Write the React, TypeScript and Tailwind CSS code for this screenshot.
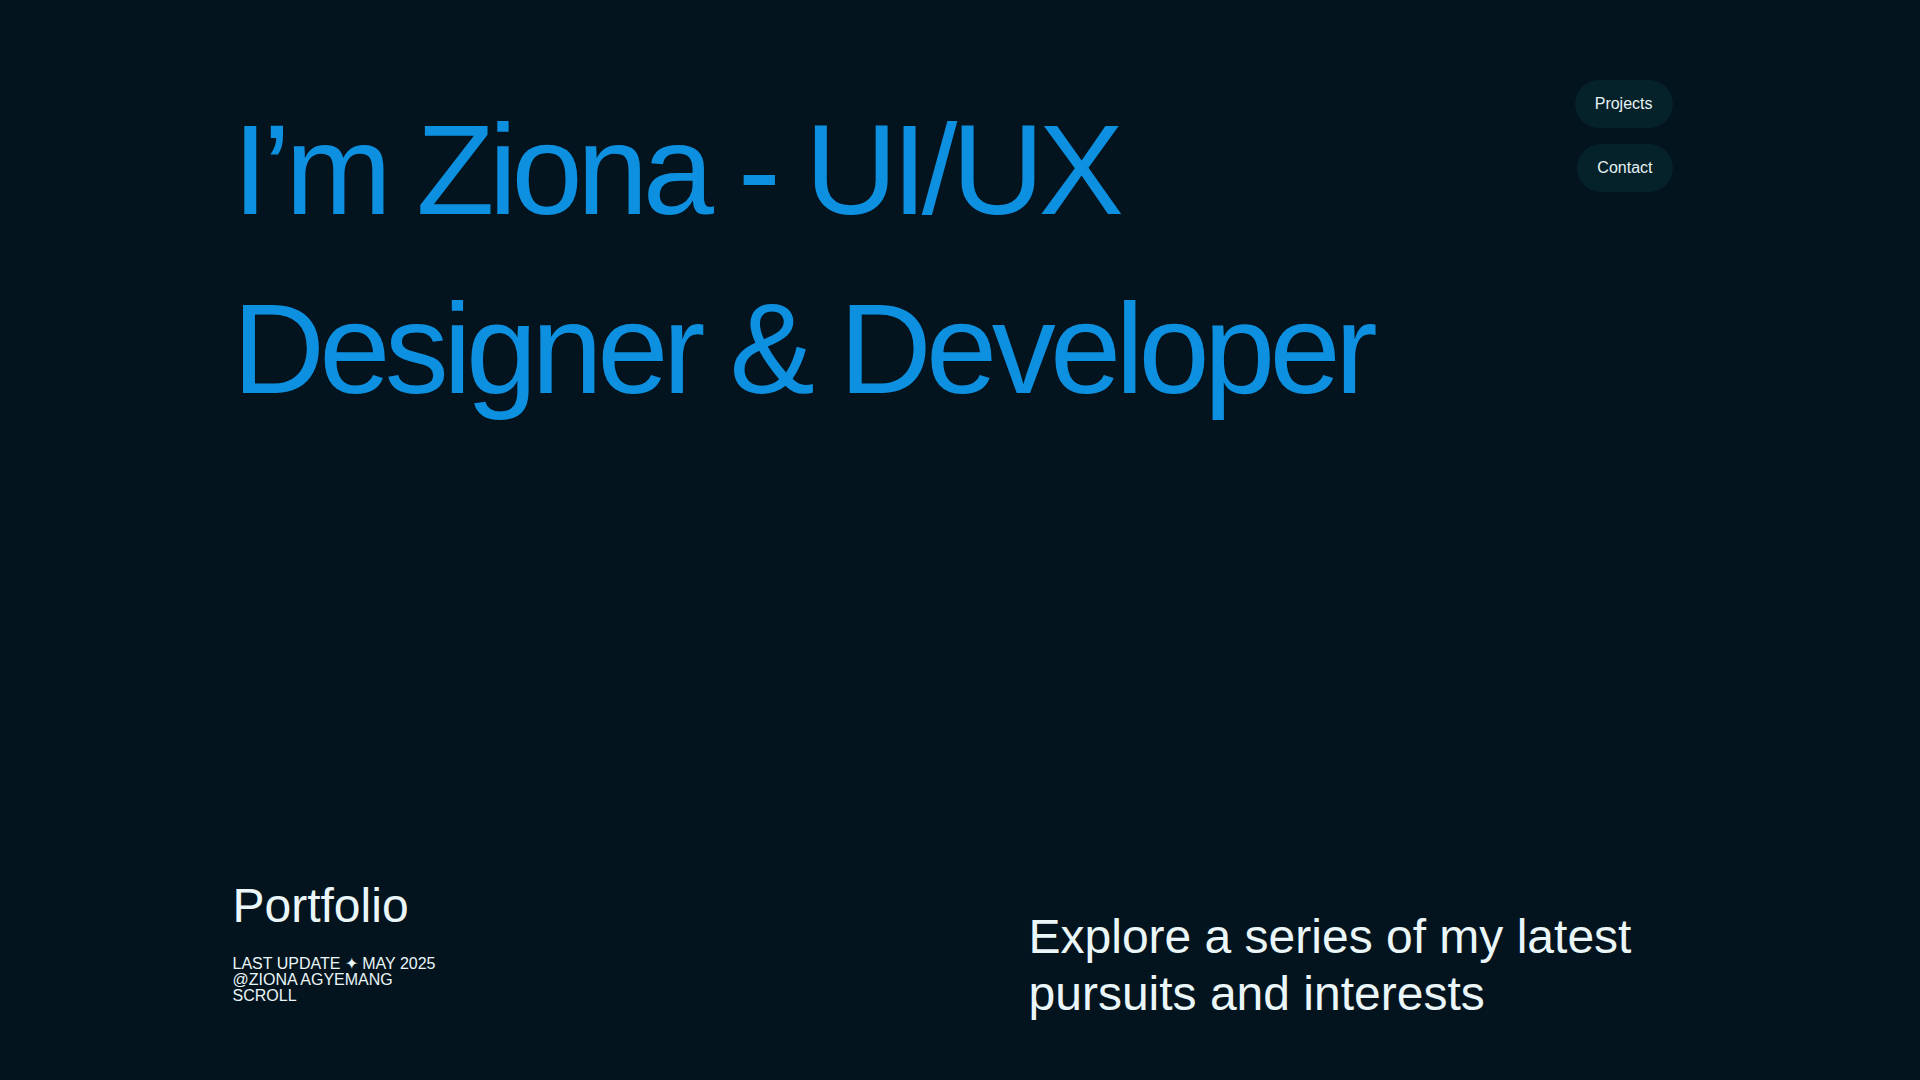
const navItems = [
  { href: '#projects', label: 'Projects' },
  { href: '#contact', label: 'Contact' },
];

const metaLines = ['LAST UPDATE ✦ MAY 2025', '@ZIONA AGYEMANG', 'SCROLL'];

function Hero() {
  return (
    <section className="mx-auto flex h-[1080px] w-full max-w-[1440px] flex-col justify-between pt-20 pb-[57px]">
      <div className="flex items-start justify-between">
        <h1 className="text-[128px] leading-[1.4] font-normal tracking-[-0.044em] text-[#0e90e0]">
          I’m Ziona - UI/UX
          <br />
          Designer &amp; Developer
        </h1>
        <nav aria-label="Main navigation" className="flex flex-col items-end gap-4">
          {navItems.map((item) => (
            <a
              key={item.href}
              href={item.href}
              className="rounded-full bg-[#05212a] px-5 py-3 text-base leading-6 text-[#e6f2f4]"
            >
              {item.label}
            </a>
          ))}
        </nav>
      </div>
      <div className="flex items-start justify-between">
        <div>
          <h2 className="text-5xl leading-none font-normal text-[#eaf6f8]">Portfolio</h2>
          <div className="mt-[26px] text-base leading-4 text-[#eaf6f8]">
            {metaLines.map((line) => (
              <p key={line}>{line}</p>
            ))}
          </div>
        </div>
        <p className="mt-[26px] w-[644px] text-5xl leading-[1.2] text-[#eaf6f8]">
          Explore a series of my latest pursuits and interests
        </p>
      </div>
    </section>
  );
}

export default function App() {
  return (
    <div className="min-h-screen bg-[#03141e] pr-[15px] font-['Liberation_Sans',Arial,sans-serif]">
      <Hero />
      <section id="projects" className="h-[7320px]" />
    </div>
  );
}
